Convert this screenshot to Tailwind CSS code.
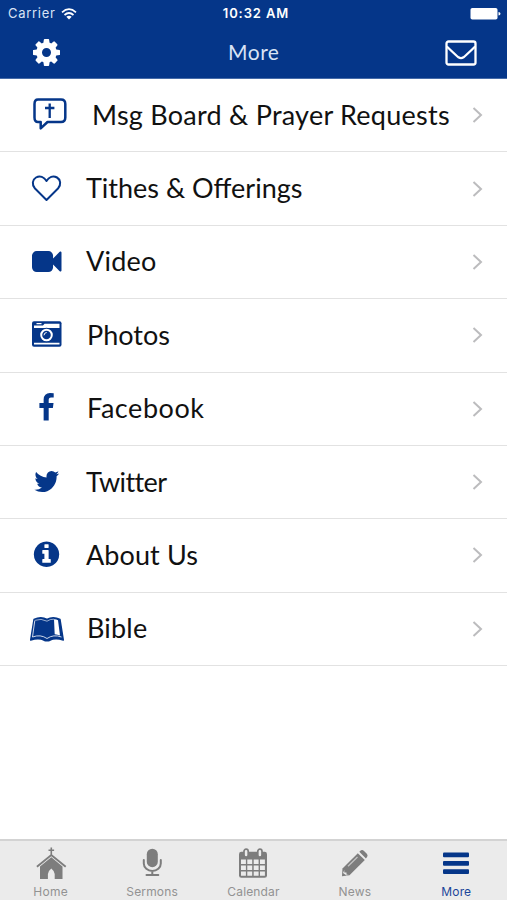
<!DOCTYPE html>
<html lang="en">
<head>
<meta charset="utf-8">
<title>More</title>
<script src="https://cdn.jsdelivr.net/npm/@tailwindcss/browser@4"></script>
</head>
<body class="bg-white">
<div class="flex h-[900px] w-[507px] flex-col overflow-hidden bg-white font-[Lato,sans-serif]">
  <header class="flex h-[79px] shrink-0 flex-col border-b border-[#466ba8] bg-[#053689] text-white">
    <div class="grid h-7 grid-cols-3 items-center pr-[6px] pl-2 font-[Inter,sans-serif] text-[13px]">
      <div class="flex items-center gap-[5px] text-[#d9e3f5]"><span class="tracking-[0.7px]">Carrier</span>
        <svg class="h-3 w-4" viewBox="0 0 16 12" fill="none" stroke="#fff" stroke-width="1.7"><path d="M1 4.3Q8-2 15 4.300M3.500 7Q8 3 12.500 7"/><path d="M8 11.500L5.300 8.800Q8 6.700 10.700 8.800Z" fill="#fff" stroke="none"/></svg>
      </div>
      <div class="-ml-px pl-1 text-center font-semibold tracking-[0.9px] whitespace-nowrap">10:32 AM</div>
      <svg class="h-[14px] w-[31px] justify-self-end" viewBox="0 0 31 14" fill="#fff"><rect x=".5" y="1" width="27" height="11.500" rx="1.800"/><path d="M28.500 5q2 .3 2 1.800t-2 1.800z"/></svg>
    </div>
    <div class="grid h-12 grid-cols-3 items-center pr-[30px] pl-[32.500px]">
      <svg class="h-[27px] w-[27px]" viewBox="128 128 1536 1536" fill="#fff"><path d="M1152 896q0-106-75-181t-181-75-181 75-75 181 75 181 181 75 181-75 75-181zm512-109v222q0 12-8 23t-20 13l-185 28q-19 54-39 91 35 50 107 138 10 12 10 25t-9 23q-27 37-99 108t-94 71q-12 0-26-9l-138-108q-44 23-91 38-16 136-29 186-7 28-36 28h-222q-14 0-24.500-8.500t-11.500-21.500l-28-184q-49-16-90-37l-141 107q-10 9-25 9-14 0-25-11-126-114-165-168-7-10-7-23 0-12 8-23 15-21 51-66.500t54-70.500q-27-50-41-99l-183-27q-13-2-21-12.500t-8-23.500v-222q0-12 8-23t19-13l186-28q14-46 39-92-40-57-107-138-10-12-10-24 0-10 9-23 26-36 98.500-107.500t94.500-71.500q13 0 26 10l138 107q44-23 91-38 16-136 29-186 7-28 36-28h222q14 0 24.500 8.500t11.500 21.500l28 184q49 16 90 37l142-107q9-9 24-9 13 0 25 10 129 119 165 170 7 8 7 22 0 12-8 23-15 21-51 66.500t-54 70.500q26 50 41 98l183 28q13 2 21 12.500t8 23.500z"/></svg>
      <h1 class="-ml-[2px] text-center text-[21px] tracking-[0.5px] text-[#d9e3f5]">More</h1>
      <svg class="mt-[2px] h-[26px] w-8 justify-self-end" viewBox="0 0 32 26" fill="none" stroke="#fff" stroke-width="2.300"><rect x="1.500" y="1.500" width="29" height="23" rx="2"/><path d="M1.800 6.500C6 10.500 10 14.500 13.500 17.300Q16 19 18.500 17.300C22 14.500 26 10.500 30.200 6.500"/></svg>
    </div>
  </header>

  <main class="grid h-[587px] shrink-0 grid-rows-8 text-[27px] leading-none text-[#111]">
    <div class="flex items-center border-b border-[#e2e2e2] pr-[24px] pl-[22px]">
      <svg class="h-12 w-12" viewBox="-24 -24 48 48" fill="none" stroke="#053689"><path stroke-width="2.500" stroke-linejoin="round" d="M-8-15.500H15Q19.300-15.500 19.300-11V2.500Q19.300 7 15 7H1.500L-5.300 13.300V7H-8Q-11.500 7-11.500 2.500V-11Q-11.500-15.500-8-15.500Z"/><path stroke-width="2.300" d="M3.700-11.500V3M-1-7H8.400"/></svg>
      <span class="-mt-[2px] ml-[22px] grow whitespace-nowrap tracking-[0.250px]">Msg Board &amp; Prayer Requests</span>
      <svg class="h-4 w-[11px] shrink-0" viewBox="0 0 11 16" fill="none" stroke="#bcbcbe" stroke-width="2"><path d="M1.500 1L9 8L1.500 15"/></svg>
    </div>
    <div class="flex items-center border-b border-[#e2e2e2] pr-[24px] pl-[22px]">
      <svg class="h-12 w-12" viewBox="-24 -24 48 48" fill="none" stroke="#053689" stroke-width="2"><path stroke-linejoin="round" d="M.5 11L-11-.5C-14.500-4.500-13.500-9.500-10-11.500C-6-13.700-2-12 .5-8C3-12 7-13.700 11-11.500C14.500-9.500 15.500-4.500 12-.5Z"/></svg>
      <span class="-mt-[2px] ml-4 grow whitespace-nowrap">Tithes &amp; Offerings</span>
      <svg class="h-4 w-[11px] shrink-0" viewBox="0 0 11 16" fill="none" stroke="#bcbcbe" stroke-width="2"><path d="M1.500 1L9 8L1.500 15"/></svg>
    </div>
    <div class="flex items-center border-b border-[#e2e2e2] pr-[24px] pl-[22px]">
      <svg class="h-12 w-12" viewBox="-24 -24 48 48" fill="#053689"><path transform="translate(-14 -15.200) scale(.01646)" d="M1792 352v1088q0 42-39 59-13 5-25 5-27 0-45-19l-403-403v166q0 119-84.500 203.500t-203.500 84.500h-704q-119 0-203.500-84.500t-84.500-203.500v-704q0-119 84.500-203.500t203.500-84.500h704q119 0 203.500 84.500t84.500 203.500v165l403-402q18-19 45-19 12 0 25 5 39 17 39 59z"/></svg>
      <span class="-mt-[2px] ml-4 grow whitespace-nowrap tracking-[0.2px]">Video</span>
      <svg class="h-4 w-[11px] shrink-0" viewBox="0 0 11 16" fill="none" stroke="#bcbcbe" stroke-width="2"><path d="M1.500 1L9 8L1.500 15"/></svg>
    </div>
    <div class="flex items-center border-b border-[#e2e2e2] pr-[24px] pl-[22px]">
      <svg class="h-12 w-12" viewBox="-24 -24 48 48"><rect x="-14" y="-13.700" width="29.500" height="25.500" rx="2" fill="#053689"/><path d="M-12-7V-9.500H-3L-1.500-11.300H13.500V-7ZM-9.500-12H-4.500V-10.800H-9.500ZM-12 7.800H13.500V9.600H-12Z" fill="#fff"/><circle cx=".5" cy="0" r="7.200" fill="#053689"/><circle cx=".5" cy="0" r="5.300" fill="#053689" stroke="#fff" stroke-width="2"/><path d="M-2 .3Q-2-2.300.7-2.500" fill="none" stroke="#fff" stroke-width="1"/></svg>
      <span class="-mt-[2px] ml-[17px] grow whitespace-nowrap">Photos</span>
      <svg class="h-4 w-[11px] shrink-0" viewBox="0 0 11 16" fill="none" stroke="#bcbcbe" stroke-width="2"><path d="M1.500 1L9 8L1.500 15"/></svg>
    </div>
    <div class="flex items-center border-b border-[#e2e2e2] pr-[24px] pl-[22px]">
      <svg class="h-12 w-12" viewBox="-24 -24 48 48" fill="#053689"><path transform="translate(-14.500 -16) scale(.01653)" d="M1343 12v264h-157q-86 0-116 36t-30 108v189h293l-39 296h-254v759h-306v-759h-255v-296h255v-218q0-186 104-288.500t277-102.500q147 0 228 12z"/></svg>
      <span class="-mt-[2px] ml-[17px] grow whitespace-nowrap tracking-[0.550px]">Facebook</span>
      <svg class="h-4 w-[11px] shrink-0" viewBox="0 0 11 16" fill="none" stroke="#bcbcbe" stroke-width="2"><path d="M1.500 1L9 8L1.500 15"/></svg>
    </div>
    <div class="flex items-center border-b border-[#e2e2e2] pr-[24px] pl-[22px]">
      <svg class="h-12 w-12" viewBox="-24 -24 48 48" fill="#053689"><path transform="translate(-13.300 -15.300) scale(.0157 .0165)" d="M1684 408q-67 98-162 167 1 14 1 42 0 130-38 259.500t-115.500 248.500-184.500 210.500-258 146-323 54.500q-271 0-496-145 35 4 78 4 225 0 401-138-105-2-188-64.500t-114-159.500q33 5 61 5 43 0 85-11-112-23-185.500-111.500t-73.500-205.500v-4q68 38 146 41-66-44-105-115t-39-154q0-88 44-163 121 149 294.500 238.500t371.500 99.500q-8-38-8-74 0-134 94.500-228.500t228.500-94.500q140 0 236 102 109-21 205-78-37 115-142 178 93-10 186-50z"/></svg>
      <span class="-mt-[2px] ml-4 grow whitespace-nowrap tracking-[-0.6px]">Twitter</span>
      <svg class="h-4 w-[11px] shrink-0" viewBox="0 0 11 16" fill="none" stroke="#bcbcbe" stroke-width="2"><path d="M1.500 1L9 8L1.500 15"/></svg>
    </div>
    <div class="flex items-center border-b border-[#e2e2e2] pr-[24px] pl-[22px]">
      <svg class="h-12 w-12" viewBox="-24 -24 48 48" fill="#053689"><path transform="translate(-14.300 -15.500) scale(.01654)" d="M1152 1376v-160q0-14-9-23t-23-9h-96v-512q0-14-9-23t-23-9h-320q-14 0-23 9t-9 23v160q0 14 9 23t23 9h96v320h-96q-14 0-23 9t-9 23v160q0 14 9 23t23 9h448q14 0 23-9t9-23zm-128-896v-160q0-14-9-23t-23-9h-192q-14 0-23 9t-9 23v160q0 14 9 23t23 9h192q14 0 23-9t9-23zm640 416q0 209-103 385.500t-279.500 279.500-385.500 103-385.500-103-279.500-279.500-103-385.500 103-385.500 279.500-279.500 385.500-103 385.500 103 279.500 279.500 103 385.500z"/></svg>
      <span class="-mt-[2px] ml-4 grow whitespace-nowrap tracking-[0.1px]">About Us</span>
      <svg class="h-4 w-[11px] shrink-0" viewBox="0 0 11 16" fill="none" stroke="#bcbcbe" stroke-width="2"><path d="M1.500 1L9 8L1.500 15"/></svg>
    </div>
    <div class="flex items-center border-b border-[#e2e2e2] pr-[24px] pl-[22px]">
      <svg class="h-12 w-12" viewBox="-24 -24 48 48" stroke-linejoin="round"><path d="M-12-9.500Q-5-13 1-9.500Q7-13 14-9.500L17.300 11Q9 8.500 4 11.200Q1 12.500-2 11.200Q-7 8.500-15.300 11Z" fill="#053689" stroke="#053689" stroke-width="1.500"/><path d="M8-9.800Q10.500-9.700 12-8.800L14 6.500Q11.500 5.500 8.700 5.300Z" fill="#fff"/><path d="M-11.200-8.500L-13.500 8Q-5.500 5 1 9.500Q7.500 5 15.500 8" fill="none" stroke="#fff" stroke-width=".8"/><path d="M-10.800-8.700Q-5-11 1-7.800Q4-10 8-9.800" fill="none" stroke="#fff" stroke-width=".6"/></svg>
      <span class="-mt-[2px] ml-[17px] grow whitespace-nowrap tracking-[0.2px]">Bible</span>
      <svg class="h-4 w-[11px] shrink-0" viewBox="0 0 11 16" fill="none" stroke="#bcbcbe" stroke-width="2"><path d="M1.500 1L9 8L1.500 15"/></svg>
    </div>
  </main>

  <nav class="mt-auto grid h-[61px] shrink-0 grid-cols-5 border-t-2 border-[#d3d3d3] bg-[#ebebeb] font-[Inter,sans-serif] text-[12px] leading-[14px] text-[#929292]">
    <div class="flex flex-col items-center pt-[5px]">
      <svg class="h-9 w-9" viewBox="0 0 36 36" fill="#7d7d7d"><path d="M17.500 1.500h1.600v2h2v1.400h-2v3.500L33.300 20l-1.200 1.400L18.300 10.200 4.500 21.400l-1.200-1.400L17.500 8.400V4.900h-2V3.500h2z"/><path d="M18.300 11.200L29.500 20.500V33H21.700V28Q21.500 25 18.300 22.500Q15.100 25 14.900 28V33H7V20.500Z"/></svg>
      <span class="mt-[3px] tracking-[0.3px]">Home</span>
    </div>
    <div class="flex flex-col items-center pt-[5px]">
      <svg class="h-9 w-9" viewBox="0 0 36 36" fill="none" stroke="#7d7d7d" stroke-width="2"><rect x="12.800" y="2.700" width="11" height="18.500" rx="5.500" fill="#7d7d7d" stroke="none"/><path d="M9.800 14v3.500a8.500 7.500 0 0 0 17 0V14M18.300 25v4M12.500 29h11.800" stroke-linecap="round"/></svg>
      <span class="mt-[3px] tracking-[0.15px]">Sermons</span>
    </div>
    <div class="flex flex-col items-center pt-[5px]">
      <svg class="h-9 w-9" viewBox="0 0 36 36"><rect x="4" y="5.800" width="28" height="26" rx="2.400" fill="#7d7d7d"/><path fill="#ebebeb" d="M6 13.500h4.900v4.400H6zM12.300 13.500h4.900v4.400h-4.900zM18.700 13.500h4.900v4.400h-4.900zM25 13.500h4.900v4.400H25zM6 19.500h4.900v4.400H6zM12.300 19.500h4.900v4.400h-4.900zM18.700 19.500h4.900v4.400h-4.900zM25 19.500h4.900v4.400H25zM6 25.500h4.900v4.300H6zM12.300 25.500h4.900v4.300h-4.900zM18.700 25.500h4.900v4.300h-4.900zM25 25.500h4.900v4.300H25z"/><g fill="#ebebeb" stroke="#7d7d7d" stroke-width="1.700"><rect x="9" y="3.200" width="4.200" height="7.800" rx="2.100"/><rect x="22.800" y="3.200" width="4.200" height="7.800" rx="2.100"/></g></svg>
      <span class="mt-[3px] tracking-[0.150px]">Calendar</span>
    </div>
    <div class="flex flex-col items-center pt-[5px]">
      <svg class="h-9 w-9" viewBox="0 0 36 36" fill="#7d7d7d"><path d="M20.800 7.200L27.800 14L12.500 29.300L5 30.200L5.500 22.500Z"/><path d="M22.300 5.800L24 4.300Q25.500 3.400 27 4.900L29.800 7.700Q31.200 9.200 30.200 10.800L28.900 12.500Z"/><path d="M7.300 23.900v2.500h2.200V28.700h2.200L9.700 29.500 6 27z" fill="#ebebeb"/><path d="M11 20.300L20.500 11" stroke="#c4c4c4" stroke-width="1.200"/></svg>
      <span class="mt-[3px] tracking-[0.150px]">News</span>
    </div>
    <div class="flex flex-col items-center pt-[5px] text-[#1b469a]">
      <svg class="h-9 w-9" viewBox="0 0 36 36" fill="#053689"><rect x="5" y="6.500" width="26" height="4.800" rx="1"/><rect x="5" y="14.900" width="26" height="4.800" rx="1"/><rect x="5" y="23.300" width="26" height="4.800" rx="1"/></svg>
      <span class="mt-[3px] tracking-[0.150px]">More</span>
    </div>
  </nav>
</div>
</body>
</html>
